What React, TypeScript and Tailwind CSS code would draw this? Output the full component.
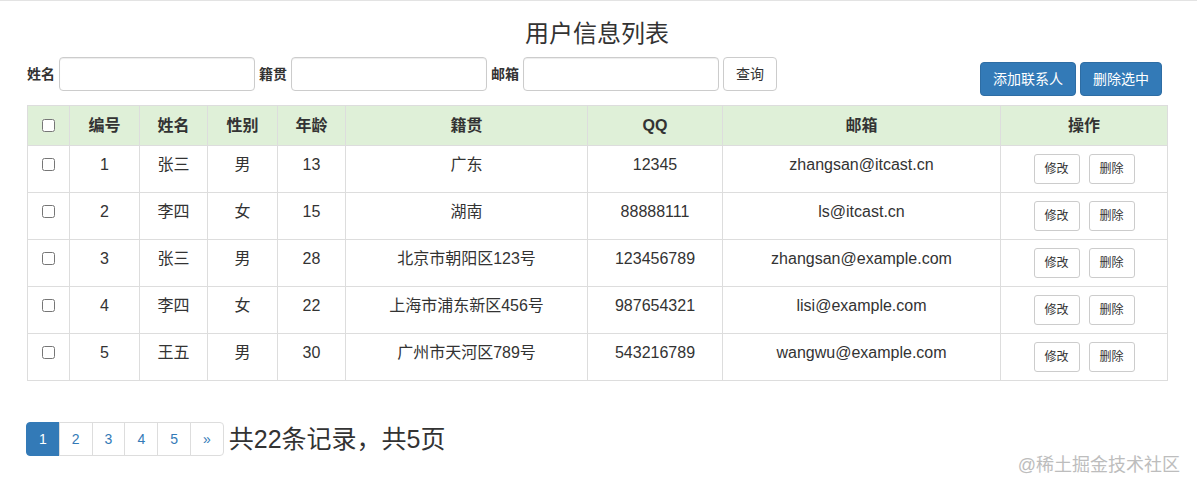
import React from 'react'

type Contact = {
  id: number
  name: string
  gender: string
  age: number
  address: string
  qq: string
  email: string
}

const contacts: Contact[] = [
  { id: 1, name: '张三', gender: '男', age: 13, address: '广东', qq: '12345', email: 'zhangsan@itcast.cn' },
  { id: 2, name: '李四', gender: '女', age: 15, address: '湖南', qq: '88888111', email: 'ls@itcast.cn' },
  { id: 3, name: '张三', gender: '男', age: 28, address: '北京市朝阳区123号', qq: '123456789', email: 'zhangsan@example.com' },
  { id: 4, name: '李四', gender: '女', age: 22, address: '上海市浦东新区456号', qq: '987654321', email: 'lisi@example.com' },
  { id: 5, name: '王五', gender: '男', age: 30, address: '广州市天河区789号', qq: '543216789', email: 'wangwu@example.com' },
]

const headers = ['编号', '姓名', '性别', '年龄', '籍贯', 'QQ', '邮箱', '操作']

function SearchField({ label }: { label: string }) {
  return (
    <div className="flex items-center">
      <label className="mr-[4px] text-[14px] font-bold text-[#333]">{label}</label>
      <input
        type="text"
        className="h-[34px] w-[196px] rounded-[4px] border border-[#ccc] bg-white px-3 shadow-[inset_0_1px_1px_rgba(0,0,0,0.075)] outline-none"
      />
    </div>
  )
}

export default function App() {
  return (
    <div className="relative h-[490px] w-[1197px] overflow-hidden border-t border-[#e3e3e3] bg-white font-['Liberation_Sans','Noto_Sans_CJK_SC',sans-serif] text-[#333]">
      <div className="w-[1167px] pl-[27px]">
        <h3 className="mt-[20px] mb-[10px] text-center text-[24px] leading-[26px] font-normal">用户信息列表</h3>

        <div className="flex items-start justify-between">
          <form className="flex items-center gap-[4px]" onSubmit={(e) => e.preventDefault()}>
            <SearchField label="姓名" />
            <SearchField label="籍贯" />
            <SearchField label="邮箱" />
            <button
              type="submit"
              className="h-[34px] w-[54px] rounded-[4px] border border-[#ccc] bg-white text-[14px] text-[#333]"
            >
              查询
            </button>
          </form>
          <div className="mt-[5px] mr-[5px] flex gap-[4px]">
            <button className="h-[34px] w-[96px] rounded-[4px] border border-[#2e6da4] bg-[#337ab7] text-[14px] text-white">
              添加联系人
            </button>
            <button className="h-[34px] w-[82px] rounded-[4px] border border-[#2e6da4] bg-[#337ab7] text-[14px] text-white">
              删除选中
            </button>
          </div>
        </div>

        <table className="mt-[9px] w-[1140px] table-fixed border-collapse border border-[#ddd] text-[16px]">
          <colgroup>
            <col className="w-[42px]" />
            <col className="w-[70px]" />
            <col className="w-[68px]" />
            <col className="w-[70px]" />
            <col className="w-[68px]" />
            <col className="w-[242px]" />
            <col className="w-[135px]" />
            <col className="w-[278px]" />
            <col className="w-[167px]" />
          </colgroup>
          <thead>
            <tr className="h-[40px] bg-[#dff0d8]">
              <th className="border border-[#ddd] p-0 align-middle">
                <input type="checkbox" className="m-0 block mx-auto h-[13px] w-[13px]" />
              </th>
              {headers.map((h) => (
                <th key={h} className="border border-[#ddd] p-0 text-center align-middle text-[16px] leading-[22px] font-bold">
                  {h}
                </th>
              ))}
            </tr>
          </thead>
          <tbody>
            {contacts.map((c) => (
              <tr key={c.id} className="h-[47px]">
                <td className="border border-[#ddd] px-2 pt-[12px] align-top">
                  <input type="checkbox" className="m-0 block mx-auto h-[13px] w-[13px]" />
                </td>
                <td className="border border-[#ddd] px-2 pt-[8px] text-center align-top leading-[21px]">{c.id}</td>
                <td className="border border-[#ddd] px-2 pt-[8px] text-center align-top leading-[21px]">{c.name}</td>
                <td className="border border-[#ddd] px-2 pt-[8px] text-center align-top leading-[21px]">{c.gender}</td>
                <td className="border border-[#ddd] px-2 pt-[8px] text-center align-top leading-[21px]">{c.age}</td>
                <td className="border border-[#ddd] px-2 pt-[8px] text-center align-top leading-[21px]">{c.address}</td>
                <td className="border border-[#ddd] px-2 pt-[8px] text-center align-top leading-[21px]">{c.qq}</td>
                <td className="border border-[#ddd] px-2 pt-[8px] text-center align-top leading-[21px]">{c.email}</td>
                <td className="border border-[#ddd] px-2 py-[8px] align-top">
                  <div className="flex justify-center gap-[9px]">
                    <button className="h-[30px] w-[46px] rounded-[3px] border border-[#ccc] bg-white text-[12px] text-[#333]">
                      修改
                    </button>
                    <button className="h-[30px] w-[46px] rounded-[3px] border border-[#ccc] bg-white text-[12px] text-[#333]">
                      删除
                    </button>
                  </div>
                </td>
              </tr>
            ))}
          </tbody>
        </table>

        <div className="mt-[41px] -ml-px flex items-center">
          <ul className="flex text-[14px] leading-[20px]">
            <li className="flex h-[34px] items-center justify-center rounded-l-[4px] border border-[#337ab7] bg-[#337ab7] px-[12px] text-white">
              1
            </li>
            {['2', '3', '4', '5', '»'].map((p) => (
              <li
                key={p}
                className="-ml-px flex h-[34px] items-center justify-center border border-[#ddd] bg-white px-[12px] text-[#337ab7] last:rounded-r-[4px]"
              >
                {p}
              </li>
            ))}
          </ul>
          <span className="ml-[5px] text-[25px] leading-[34px] text-[#333]">共22条记录，共5页</span>
        </div>
      </div>

      <div className="absolute right-[17px] bottom-[15px] text-[18px] leading-[20px] text-[#bdbdbd]">@稀土掘金技术社区</div>
    </div>
  )
}
